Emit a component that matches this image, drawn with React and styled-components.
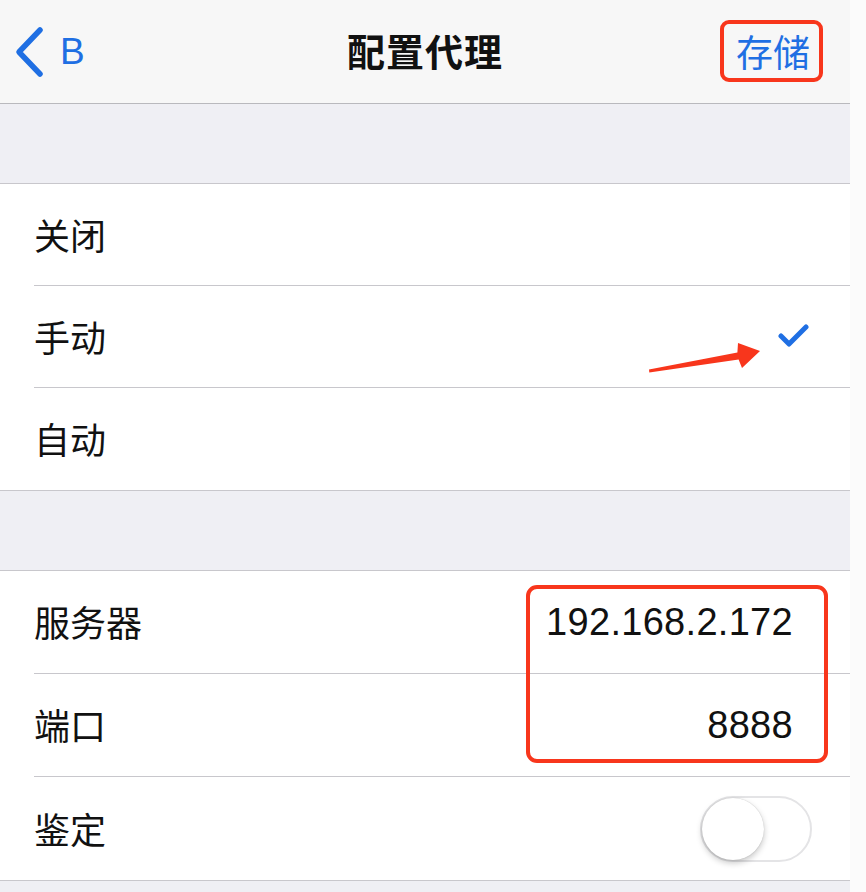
import React from 'react';
import styled, { createGlobalStyle } from 'styled-components';

const GlobalStyle = createGlobalStyle`
  html, body {
    margin: 0;
    padding: 0;
    background: #fbfbfb;
  }
  body {
    font-family: "Liberation Sans", "Noto Sans CJK SC", sans-serif;
  }
`;

const BLUE = '#1f6fe3';
const RED = '#f8361c';
const LINE = '#c8c7cc';

const Screen = styled.div`
  width: 850px;
  height: 892px;
  background: #efeff4;
  overflow: hidden;
`;

const NavBar = styled.div`
  height: 104px;
  box-sizing: border-box;
  background: #f7f7f7;
  border-bottom: 1px solid #b9b9bd;
  display: grid;
  grid-template-columns: 1fr auto 1fr;
  align-items: center;
`;

const BackButton = styled.div`
  display: flex;
  align-items: center;
  gap: 14px;
  padding-left: 14px;
  color: ${BLUE};
  font-size: 37px;
  font-family: "Liberation Sans", sans-serif;
`;

const Title = styled.div`
  font-family: "Noto Sans CJK SC", sans-serif;
  font-size: 38px;
  font-weight: 700;
  color: #111;
  letter-spacing: 1px;
  margin-top: -4px;
`;

const SaveButton = styled.div`
  justify-self: end;
  margin-right: 27px;
  margin-top: -2px;
  height: 62px;
  box-sizing: border-box;
  padding: 0 9px 0 12px;
  display: flex;
  align-items: center;
  border: 4px solid ${RED};
  border-radius: 9px;
  color: ${BLUE};
  font-family: "Noto Sans CJK SC", sans-serif;
  font-size: 37px;
`;

const Gap = styled.div`
  height: ${p => p.$h}px;
`;

const Section = styled.div`
  position: relative;
  background: #fff;
  border-top: 1px solid ${LINE};
  border-bottom: 1px solid ${LINE};
`;

const Row = styled.div`
  position: relative;
  padding-left: 34px;
`;

const RowInner = styled.div`
  height: ${p => p.$h || 102}px;
  box-sizing: border-box;
  display: flex;
  align-items: center;
  justify-content: space-between;
  padding-right: 40px;
  border-bottom: ${p => (p.$last ? 'none' : `1px solid ${LINE}`)};
`;

const Label = styled.span`
  font-family: "Noto Sans CJK SC", sans-serif;
  font-size: 36px;
  color: #111;
  margin-top: -2px;
`;

const Value = styled.span`
  font-family: "Liberation Sans", sans-serif;
  font-size: 38px;
  letter-spacing: 0.3px;
  color: #111;
  margin-right: 17px;
`;

const Toggle = styled.div`
  width: 112px;
  height: 66px;
  box-sizing: border-box;
  border: 2px solid #e4e4e6;
  border-radius: 33px;
  background: #fff;
  margin-right: -2px;
  display: flex;
  align-items: center;
`;

const Knob = styled.div`
  width: 62px;
  height: 62px;
  border-radius: 50%;
  background: #fff;
  box-shadow: 0 3px 6px rgba(0, 0, 0, 0.22), 0 0 1px rgba(0, 0, 0, 0.25);
`;

const Arrow = styled.svg`
  position: absolute;
  left: 640px;
  top: 50px;
`;

const HighlightBox = styled.div`
  position: absolute;
  left: 526px;
  top: 14px;
  width: 302px;
  height: 178px;
  box-sizing: border-box;
  border: 4px solid ${RED};
  border-radius: 11px;
  pointer-events: none;
`;

const Chevron = () => (
  <svg width="32" height="52" viewBox="0 0 32 52">
    <path d="M26 4 L5 26 L26 48" fill="none" stroke={BLUE} strokeWidth="5.5" strokeLinecap="round" strokeLinejoin="round" />
  </svg>
);

const Check = () => (
  <svg width="32" height="26" viewBox="0 0 32 26">
    <path d="M3 12 L11 20 L28 3" fill="none" stroke={BLUE} strokeWidth="5" strokeLinecap="round" strokeLinejoin="round" />
  </svg>
);

const modes = ['关闭', '手动', '自动'];

export default function App() {
  return (
    <>
      <GlobalStyle />
      <Screen>
        <NavBar>
          <BackButton>
            <Chevron />
            <span>B</span>
          </BackButton>
          <Title>配置代理</Title>
          <SaveButton>存储</SaveButton>
        </NavBar>

        <Gap $h={79} />

        <Section>
          {modes.map((m, i) => (
            <Row key={m}>
              <RowInner $last={i === modes.length - 1}>
                <Label>{m}</Label>
                {m === '手动' && <Check />}
              </RowInner>
              {m === '手动' && (
                <Arrow width="130" height="40" viewBox="0 0 130 40">
                  <polygon
                    points="9,33.5 97.4,16.6 98,7 120,15 102,32 98.6,23.4 9.3,36.5"
                    fill={RED}
                  />
                </Arrow>
              )}
            </Row>
          ))}
        </Section>

        <Gap $h={79} />

        <Section>
          <Row>
            <RowInner $h={103}>
              <Label>服务器</Label>
              <Value>192.168.2.172</Value>
            </RowInner>
          </Row>
          <Row>
            <RowInner $h={103}>
              <Label>端口</Label>
              <Value>8888</Value>
            </RowInner>
          </Row>
          <Row>
            <RowInner $h={103} $last>
              <Label>鉴定</Label>
              <Toggle>
                <Knob />
              </Toggle>
            </RowInner>
          </Row>
          <HighlightBox />
        </Section>
      </Screen>
    </>
  );
}
